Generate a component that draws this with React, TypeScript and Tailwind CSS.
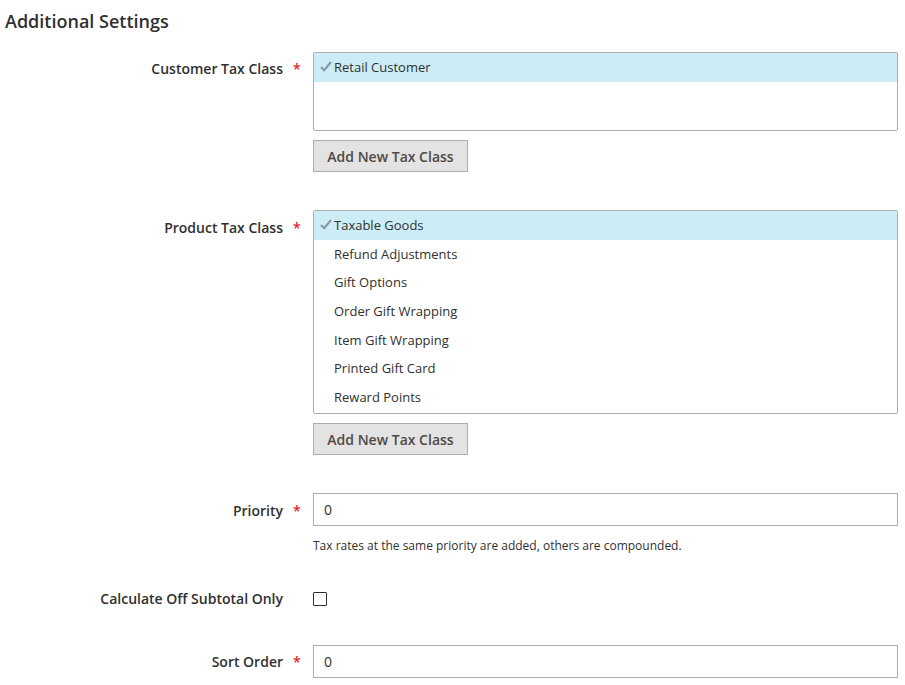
import React from 'react';

const font = { fontFamily: '"Open Sans", "Liberation Sans", sans-serif' };

const Check = () => (
  <svg width="12" height="11" viewBox="0 0 12 11" className="absolute left-[6px] top-[8px]">
    <path d="M1 6 L4.2 9.2 L11 1" fill="none" stroke="#8596a4" strokeWidth="2" />
  </svg>
);

const Label: React.FC<{ text: string; required?: boolean }> = ({ text, required }) => (
  <div className="flex shrink-0">
    <div className="w-[283px] text-right text-[14px] font-semibold text-[#303030]">{text}</div>
    <div className="w-[30px] pl-[10px] text-[14px] font-semibold text-[#e22626]">{required ? '*' : ''}</div>
  </div>
);

const ListBox: React.FC<{ items: string[]; height: string }> = ({ items, height }) => (
  <div className={`w-[585px] border border-[#adadad] rounded-[2px] bg-white ${height}`}>
    {items.map((it, i) => (
      <div
        key={it}
        className={`relative h-[28.7px] leading-[28.7px] pl-[20px] text-[13px] text-[#303030] ${i === 0 ? 'bg-[#cdedf6]' : ''}`}
      >
        {i === 0 && <Check />}
        {it}
      </div>
    ))}
  </div>
);

const AddButton = () => (
  <button className="mt-[9px] w-[155px] h-[32px] border border-[#adadad] bg-[#e3e3e3] text-[14px] font-semibold text-[#514943]">
    Add New Tax Class
  </button>
);

export default function App() {
  return (
    <div className="w-[905px] h-[685px] bg-white overflow-hidden" style={font}>
      <h2 className="pl-[5px] pt-[9px] text-[18px] leading-[24px] font-semibold text-[#303030]">Additional Settings</h2>

      <div className="flex mt-[19px]">
        <div className="pt-[6px]"><Label text="Customer Tax Class" required /></div>
        <div className="flex flex-col items-start">
          <ListBox items={['Retail Customer']} height="h-[79px]" />
          <AddButton />
        </div>
      </div>

      <div className="flex mt-[38px]">
        <div className="pt-[7px]"><Label text="Product Tax Class" required /></div>
        <div className="flex flex-col items-start">
          <ListBox
            items={['Taxable Goods', 'Refund Adjustments', 'Gift Options', 'Order Gift Wrapping', 'Item Gift Wrapping', 'Printed Gift Card', 'Reward Points']}
            height="h-[204px]"
          />
          <AddButton />
        </div>
      </div>

      <div className="flex mt-[38px]">
        <div className="pt-[7px]"><Label text="Priority" required /></div>
        <div className="flex flex-col items-start">
          <div className="w-[585px] h-[33px] border border-[#adadad] px-[10px] text-[14px] leading-[31px] text-[#303030]">0</div>
          <div className="mt-[11px] text-[12px] text-[#303030]">Tax rates at the same priority are added, others are compounded.</div>
        </div>
      </div>

      <div className="flex items-center mt-[33px]">
        <Label text="Calculate Off Subtotal Only" />
        <div className="w-[14px] h-[14px] border border-[#303030] rounded-[1px]" />
      </div>

      <div className="flex mt-[36px]">
        <div className="pt-[6px]"><Label text="Sort Order" required /></div>
        <div className="w-[585px] h-[33px] border border-[#adadad] px-[10px] text-[14px] leading-[31px] text-[#303030]">0</div>
      </div>
    </div>
  );
}
